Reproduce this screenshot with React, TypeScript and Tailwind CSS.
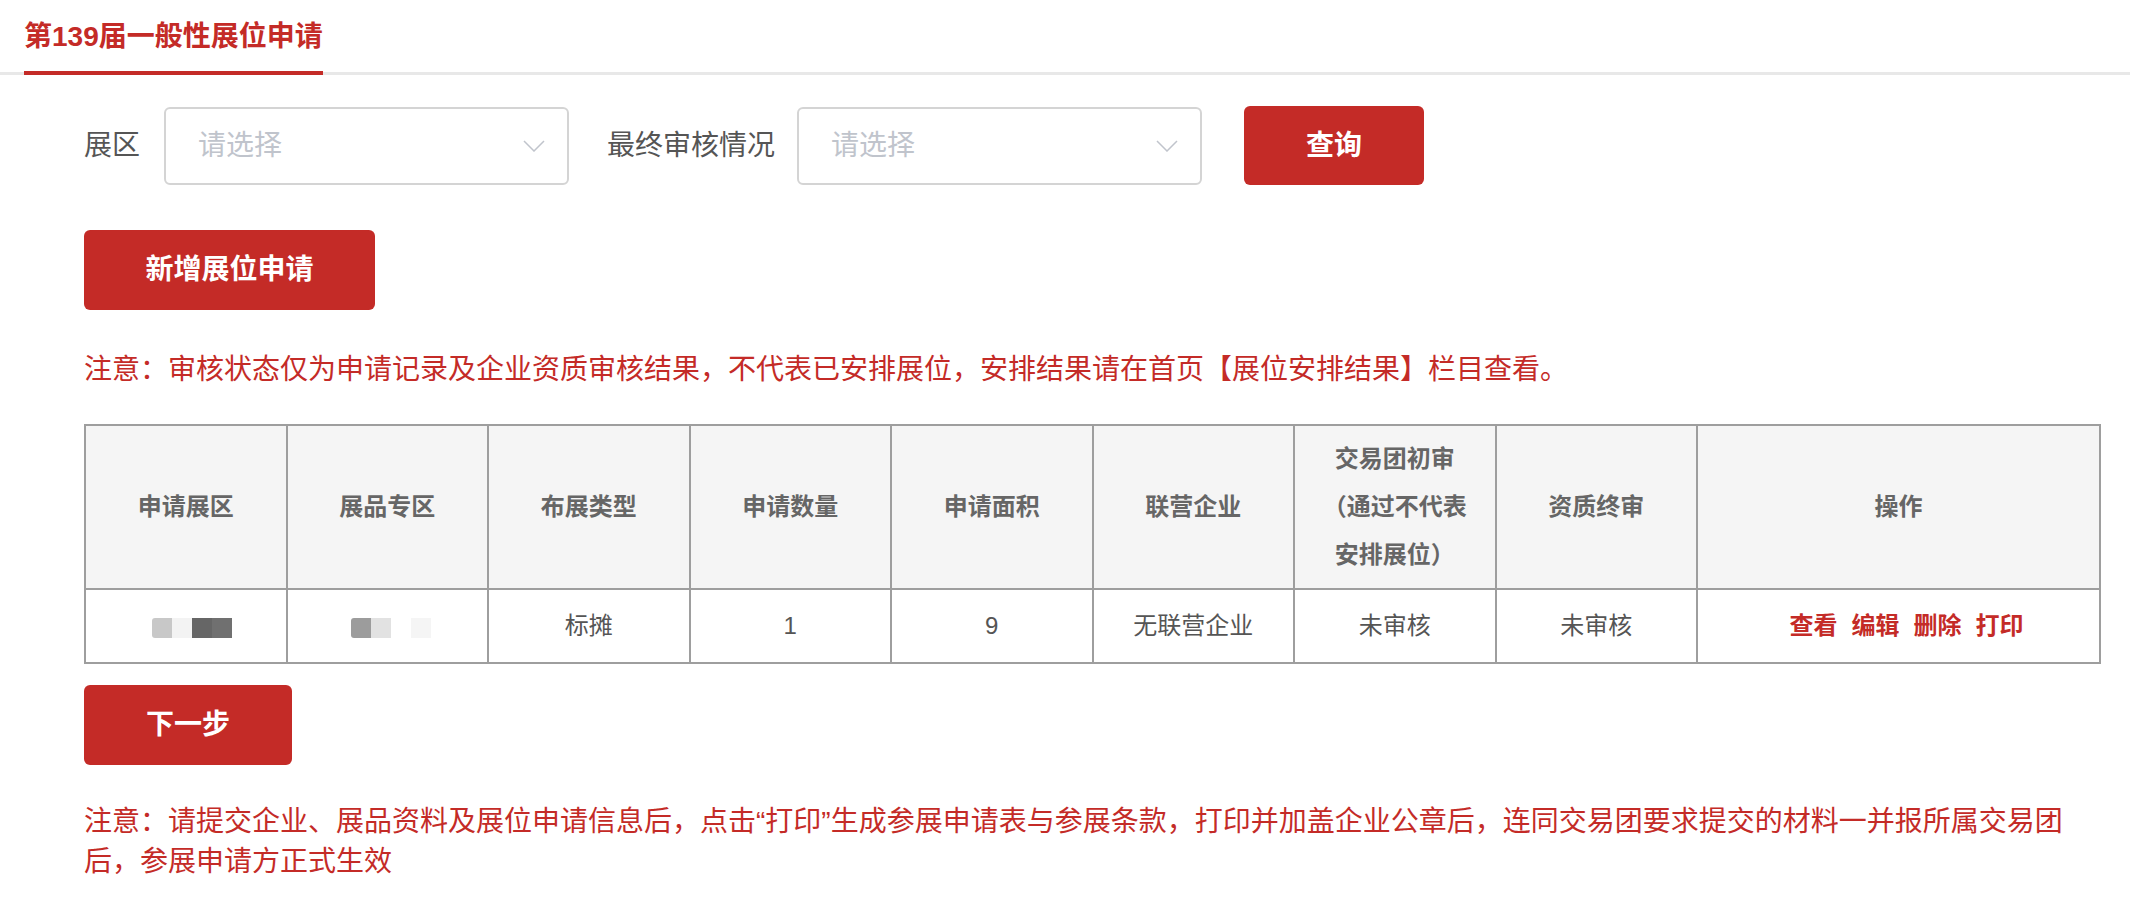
import React from 'react';

const font = { fontFamily: '"Liberation Sans", "Noto Sans CJK SC", sans-serif' };

const headers = ['申请展区', '展品专区', '布展类型', '申请数量', '申请面积', '联营企业', '交易团初审（通过不代表安排展位）', '资质终审', '操作'];

const Select: React.FC = () => (
  <div className="flex h-[78px] w-[405px] items-center justify-between rounded-[6px] border-2 border-[#d4d4d4] bg-white pl-[32px] pr-[22px]">
    <span className="text-[28px] text-[#c0c4cc]">请选择</span>
    <svg width="22" height="12" viewBox="0 0 22 12" fill="none">
      <polyline points="1,1 11,11 21,1" stroke="#c0c4cc" strokeWidth="1.5" />
    </svg>
  </div>
);

const Blur: React.FC<{ colors: string[] }> = ({ colors }) => (
  <div className="inline-flex align-middle">
    {colors.map((c, i) => (
      <div key={i} className={`h-[20px] w-[20px] ${i === 0 ? 'rounded-l-[3px]' : ''}`} style={{ backgroundColor: c }} />
    ))}
  </div>
);

export default function App() {
  return (
    <div className="min-h-screen bg-white" style={font}>
      <div className="border-b-[3px] border-[#e8e8e8]">
        <div className="ml-[24px] mb-[-3px] inline-block border-b-4 border-[#c42b27] pt-[16px] pb-[13px] text-[28px] font-bold leading-[42px] text-[#c42b27]">
          第139届一般性展位申请
        </div>
      </div>

      <div className="pl-[84px] pr-[29px]">
        <div className="mt-[31px] flex items-center">
          <span className="mr-[24px] text-[28px] text-[#555]">展区</span>
          <Select />
          <span className="ml-[38px] mr-[22px] text-[28px] text-[#555]">最终审核情况</span>
          <Select />
          <button className="ml-[42px] h-[79px] w-[180px] rounded-[6px] bg-[#c42b27] text-[28px] font-bold text-white">查询</button>
        </div>

        <button className="mt-[45px] h-[80px] w-[291px] rounded-[6px] bg-[#c42b27] text-[28px] font-bold text-white">新增展位申请</button>

        <p className="mt-[39px] text-[28px] leading-[42px] text-[#c42b27]">
          注意：审核状态仅为申请记录及企业资质审核结果，不代表已安排展位，安排结果请在首页【展位安排结果】栏目查看。
        </p>

        <table className="mt-[33px] w-full table-fixed border-collapse border-2 border-[#9e9e9e] text-center">
          <colgroup>
            {headers.map((h, i) => (
              <col key={h} className={i === 8 ? 'w-[20%]' : 'w-[10%]'} />
            ))}
          </colgroup>
          <thead>
            <tr className="bg-[#f5f5f5]">
              {headers.map((h) => (
                <th key={h} className="border-2 border-[#9e9e9e] px-[22px] py-[9px] text-[24px] font-bold leading-[48px] text-[#666]">
                  {h}
                </th>
              ))}
            </tr>
          </thead>
          <tbody>
            <tr className="text-[24px] leading-[48px] text-[#555]">
              <td className="border-2 border-[#9e9e9e] py-[12px] pl-[12px]">
                <Blur colors={['#c8c8c8', '#f3f3f3', '#666666', '#707070']} />
              </td>
              <td className="border-2 border-[#9e9e9e] py-[12px] pl-[8px]">
                <Blur colors={['#9c9c9c', '#e2e2e2', '#ffffff', '#f5f5f5']} />
              </td>
              <td className="border-2 border-[#9e9e9e] py-[12px]">标摊</td>
              <td className="border-2 border-[#9e9e9e] py-[12px]">1</td>
              <td className="border-2 border-[#9e9e9e] py-[12px]">9</td>
              <td className="border-2 border-[#9e9e9e] py-[12px]">无联营企业</td>
              <td className="border-2 border-[#9e9e9e] py-[12px]">未审核</td>
              <td className="border-2 border-[#9e9e9e] py-[12px]">未审核</td>
              <td className="border-2 border-[#9e9e9e] py-[12px] pl-[16px]">
                <div className="inline-flex gap-[14px] font-bold text-[#c42b27]">
                  <a>查看</a>
                  <a>编辑</a>
                  <a>删除</a>
                  <a>打印</a>
                </div>
              </td>
            </tr>
          </tbody>
        </table>

        <button className="mt-[21px] h-[80px] w-[208px] rounded-[6px] bg-[#c42b27] text-[28px] font-bold text-white">下一步</button>

        <p className="mt-[37px] pr-[20px] text-[28px] leading-[40px] text-[#c42b27]">
          注意：请提交企业、展品资料及展位申请信息后，点击“打印”生成参展申请表与参展条款，打印并加盖企业公章后，连同交易团要求提交的材料一并报所属交易团后，参展申请方正式生效
        </p>
      </div>
    </div>
  );
}
